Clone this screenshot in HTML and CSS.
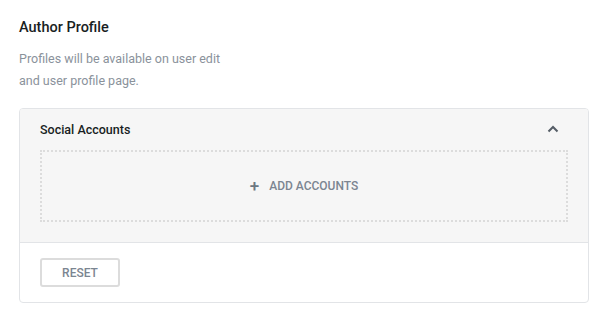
FILE: index.html
```html
<!DOCTYPE html>
<html lang="en">
<head>
  <meta charset="UTF-8">
  <title>Author Profile</title>
  <link rel="stylesheet" href="styles.css">
</head>
<body>
  <div class="wrap">
    <h2 class="title">Author Profile</h2>
    <p class="desc">Profiles will be available on user edit<br>and user profile page.</p>

    <div class="panel">
      <div class="panel-head">
        <div class="panel-bar">
          <span class="panel-name">Social Accounts</span>
          <svg class="chev" width="12" height="8" viewBox="0 0 12 8"><path d="M1.5 6.5 6 2l4.5 4.5" fill="none" stroke="#555d66" stroke-width="2"/></svg>
        </div>
        <div class="drop">
          <span class="plus">+</span>
          <span>ADD ACCOUNTS</span>
        </div>
      </div>
      <div class="panel-foot">
        <button class="reset">RESET</button>
      </div>
    </div>
  </div>
</body>
</html>
```

FILE: styles.css
```css
html {
  box-sizing: border-box;
}
*, *::before, *::after {
  box-sizing: inherit;
}
body {
  margin: 0;
  background: #fff;
  font-family: Roboto, "Liberation Sans", sans-serif;
}
.wrap {
  padding: 18px 21px 0 19px;
}
.title {
  margin: 0;
  font-size: 14.5px;
  font-weight: 500;
  line-height: 20px;
  color: #191e23;
}
.desc {
  margin: 10px 0 0;
  font-size: 12.5px;
  line-height: 22px;
  color: #8a929b;
}
.panel {
  margin-top: 16px;
  border: 1px solid #e2e4e7;
  border-radius: 4px;
  overflow: hidden;
}
.panel-head {
  background: #f6f6f6;
  padding: 10px 20px 20px;
  border-bottom: 1px solid #e2e4e7;
}
.panel-bar {
  display: flex;
  justify-content: space-between;
  align-items: center;
  height: 20px;
  margin-bottom: 11px;
}
.panel-name {
  font-size: 12.5px;
  font-weight: 500;
  color: #191e23;
}
.chev {
  margin-right: 9px;
}
.drop {
  height: 72px;
  border: 2px dotted #dcdcdc;
  display: flex;
  justify-content: center;
  align-items: center;
  gap: 10px;
  font-size: 12px;
  font-weight: 500;
  color: #7b8591;
}
.plus {
  font-size: 17px;
  font-weight: 500;
  line-height: 1;
  color: #6c7781;
}
.panel-foot {
  padding: 15px 20px;
}
.reset {
  width: 80px;
  height: 29px;
  border: 2px solid #dcdcdc;
  border-radius: 3px;
  background: #fff;
  font-family: Roboto, "Liberation Sans", sans-serif;
  font-size: 12px;
  font-weight: 500;
  color: #7b8591;
  padding: 0;
}
```
